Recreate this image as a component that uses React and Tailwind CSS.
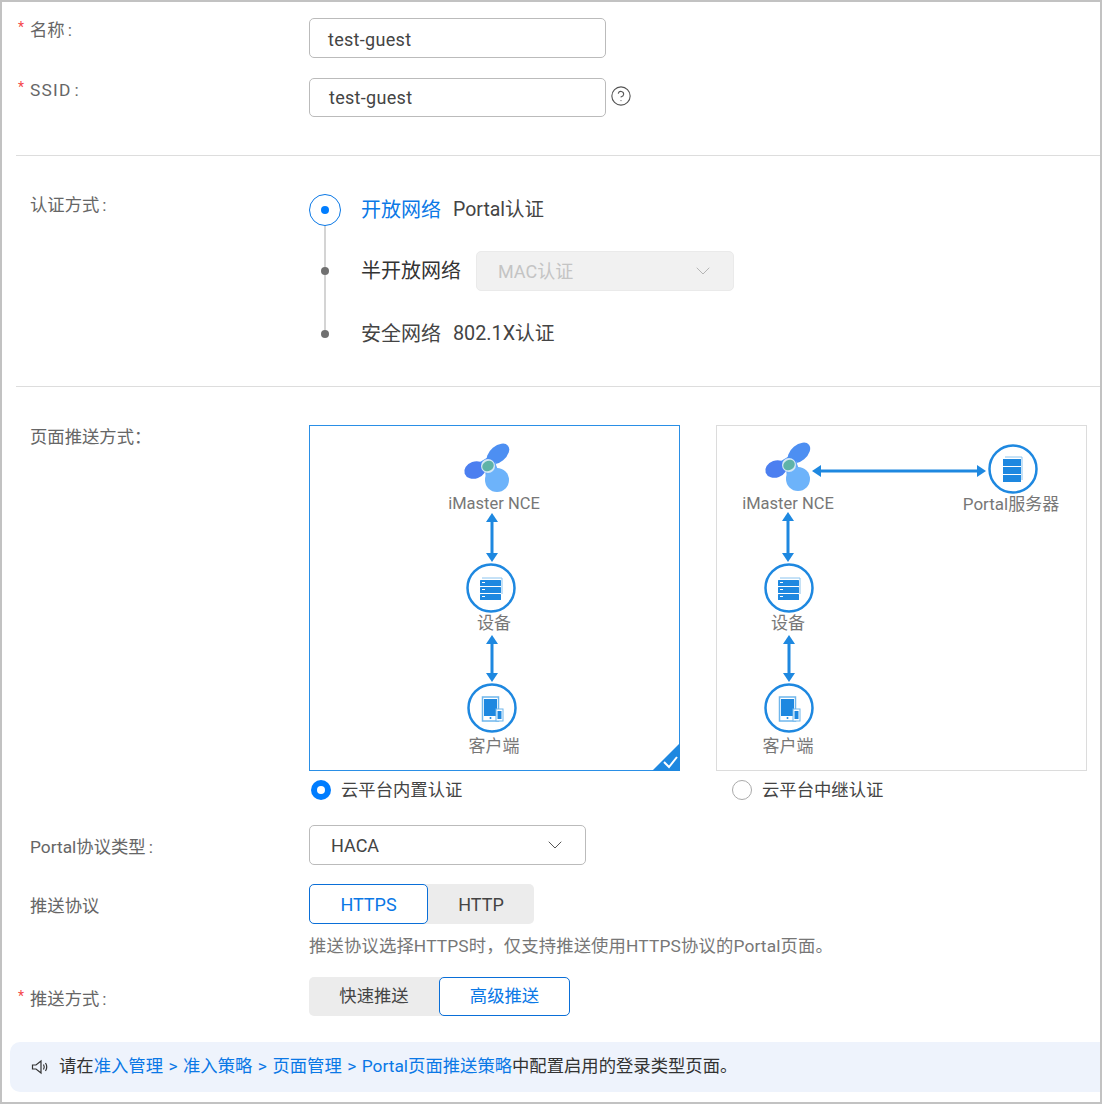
import { ChevronDown, CircleHelp } from 'lucide-react';

const FONT = "font-['Roboto','Noto_Sans_CJK_SC',sans-serif]";

const Label = ({ required, colon, children, className = '' }) => (
  <div className={`w-[307px] shrink-0 flex pl-[16px] text-[17.33px] leading-[24px] text-[#666] ${className}`}>
    <span className="w-[12px] text-[14px] leading-[18px] text-[#f5484a]">{required ? '*' : ''}</span>
    <span>{children}</span>
    {colon && <span className="ml-[3px]">:</span>}
  </div>
);

const Logo = ({ x, y }) => (
  <g transform={`translate(${x} ${y})`}>
    <ellipse cx="10" cy="-12" rx="13" ry="8" fill="#4d8ff2" transform="rotate(-40 10 -12)" />
    <ellipse cx="-13" cy="4" rx="11" ry="8.5" fill="#4c7ff0" transform="rotate(-20 -13 4)" />
    <path d="M-8 -4 L2 -10 L8 -4 L4 4 L-4 6 Z" fill="#4d8ff2" />
    <path d="M-3 3 L8 -4 Q7 3 15 6 L12 14 L-2 14 Z" fill="#67aaf8" />
    <circle cx="9" cy="14" r="12" fill="#6db3fa" />
    <circle cx="0" cy="0" r="7" fill="#d5e8f5" />
    <ellipse cx="0" cy="0" rx="6" ry="5" fill="#5fb3a8" transform="rotate(-30)" />
  </g>
);

const VArrow = ({ x, y1, y2 }) => (
  <g fill="#1e88e0">
    <rect x={x - 1.5} y={y1 + 6} width="3" height={y2 - y1 - 12} />
    <path d={`M${x} ${y1} L${x + 6} ${y1 + 9} L${x - 6} ${y1 + 9} Z`} />
    <path d={`M${x} ${y2} L${x + 6} ${y2 - 9} L${x - 6} ${y2 - 9} Z`} />
  </g>
);

const HArrow = ({ y, x1, x2 }) => (
  <g fill="#1e88e0">
    <rect x={x1 + 6} y={y - 1.5} width={x2 - x1 - 12} height="3" />
    <path d={`M${x1} ${y} L${x1 + 9} ${y - 6} L${x1 + 9} ${y + 6} Z`} />
    <path d={`M${x2} ${y} L${x2 - 9} ${y - 6} L${x2 - 9} ${y + 6} Z`} />
  </g>
);

const Ring = ({ x, y }) => <circle cx={x} cy={y} r="23.5" fill="#fff" stroke="#1e88e0" strokeWidth="2.5" />;

const Device = ({ x, y }) => (
  <g>
    <Ring x={x} y={y} />
    <path d={`M${x - 9} ${y - 10} H${x + 11} V${y + 6}`} fill="none" stroke="#8cc4ee" strokeWidth="1" />
    {[-8, -1, 6].map((d) => (
      <g key={d}>
        <rect x={x - 11} y={y + d} width="21" height="6" rx="0.5" fill="#1e88e0" />
        <rect x={x - 9} y={y + d + 2} width="3" height="1" fill="#fff" />
      </g>
    ))}
  </g>
);

const Client = ({ x, y }) => (
  <g>
    <Ring x={x} y={y} />
    <rect x={x - 9.5} y={y - 11} width="16" height="24" fill="#fff" stroke="#6fb6ec" strokeWidth="1.5" />
    <rect x={x - 8} y={y - 9} width="13" height="17" fill="#1e88e0" />
    <circle cx={x - 1.5} cy={y + 10} r="1" fill="#1e88e0" />
    <rect x={x + 4} y={y + 1} width="7" height="12" fill="#fff" stroke="#6fb6ec" strokeWidth="1" />
    <rect x={x + 5.5} y={y + 3} width="4" height="8" fill="#1e88e0" />
  </g>
);

const PortalServer = ({ x, y }) => (
  <g>
    <Ring x={x} y={y} />
    <path d={`M${x - 8} ${y - 12} H${x + 9} V${y + 11}`} fill="none" stroke="#8cc4ee" strokeWidth="1" />
    {[-10, -2, 6].map((d) => (
      <rect key={d} x={x - 10} y={y + d} width="18" height="7" fill="#1e88e0" />
    ))}
  </g>
);

const DiagramText = ({ x, y, small, children }) => (
  <span
    className={`absolute -translate-x-1/2 -translate-y-1/2 whitespace-nowrap leading-[24px] text-[#777] ${small ? 'text-[16.5px]' : 'text-[17px]'}`}
    style={{ left: x, top: y }}
  >
    {children}
  </span>
);

const CardOne = () => (
  <div className="relative w-[371px] h-[346px] border border-[#2a8fe6] bg-white">
    <svg className="absolute -left-px -top-px" width="371" height="346" viewBox="0 0 371 346">
      <Logo x={179} y={41} />
      <VArrow x={183} y1={88} y2={137} />
      <Device x={182} y={163} />
      <VArrow x={183} y1={210} y2={257} />
      <Client x={183} y={283} />
      <path d="M343 346 L371 318 V346 Z" fill="#1e88e0" />
      <path d="M355 337 L360 342 L368 332" fill="none" stroke="#fff" strokeWidth="2" />
    </svg>
    <DiagramText small x={184} y={78}>iMaster NCE</DiagramText>
    <DiagramText x={184} y={197}>设备</DiagramText>
    <DiagramText x={184} y={320}>客户端</DiagramText>
  </div>
);

const CardTwo = () => (
  <div className="relative w-[371px] h-[346px] border border-[#dcdcdc] bg-white">
    <svg className="absolute -left-px -top-px" width="371" height="346" viewBox="0 0 371 346">
      <Logo x={73} y={40} />
      <HArrow y={46} x1={96} x2={270} />
      <PortalServer x={297} y={44} />
      <VArrow x={72} y1={87} y2={137} />
      <Device x={73} y={163} />
      <VArrow x={73} y1={210} y2={257} />
      <Client x={73} y={283} />
    </svg>
    <DiagramText small x={71} y={78}>iMaster NCE</DiagramText>
    <DiagramText x={294} y={78}>Portal服务器</DiagramText>
    <DiagramText x={71} y={197}>设备</DiagramText>
    <DiagramText x={71} y={320}>客户端</DiagramText>
  </div>
);

const Seg = ({ active, className = '', children }) => (
  <div
    className={`flex items-center justify-center pt-[1px] ${
      active ? 'bg-white border border-[#0a6fd8] rounded-[5px] text-[#0a78e6]' : 'text-[#444]'
    } ${className}`}
  >
    {children}
  </div>
);

export default function App() {
  return (
    <div className={`${FONT} box-border w-[1102px] h-[1104px] border-2 border-[#c2c2c2] bg-white overflow-hidden`}>
      <div className="flex mt-[16px]">
        <Label required colon>名称</Label>
        <div className="w-[297px] h-[40px] border border-[#bbb] rounded-[5px] pl-[18px] pt-[2px] flex items-center text-[18px] tracking-[0.3px] text-[#444]">test-guest</div>
      </div>
      <div className="flex mt-[20px]">
        <Label required colon><span className="tracking-[1.2px]">SSID</span></Label>
        <div className="w-[297px] h-[39px] border border-[#bbb] rounded-[5px] pl-[19px] flex items-center text-[18px] tracking-[0.3px] text-[#444]">test-guest</div>
        <CircleHelp size={22} strokeWidth={1.2} color="#555" className="ml-[4px] mt-[7px]" />
      </div>
      <div className="h-px bg-[#ddd] ml-[14px] mt-[38px]" />

      <div className="flex mt-[37px]">
        <Label colon>认证方式</Label>
        <div className="relative flex flex-col">
          <div className="absolute left-[15px] top-[20px] w-[2px] h-[120px] bg-[#d4d4d4]" />
          <div className="flex items-center h-[32px] pt-[1px] text-[20px] text-[#444]">
            <div className="relative w-[32px] h-[32px] rounded-full border border-[#0a78e6] bg-white flex items-center justify-center">
              <div className="w-[8px] h-[8px] rounded-full bg-[#007dff]" />
            </div>
            <span className="ml-[20px] text-[#0a78e6]">开放网络</span>
            <span className="ml-[12px] text-[19.5px]">Portal认证</span>
          </div>
          <div className="flex items-center h-[40px] mt-[26px] text-[20px] text-[#333]">
            <div className="relative w-[32px] flex justify-center">
              <div className="w-[8px] h-[8px] rounded-full bg-[#707070]" />
            </div>
            <span className="ml-[20px]">半开放网络</span>
            <div className="ml-[15px] w-[258px] h-[40px] rounded-[5px] border border-[#eaeaea] bg-[#f1f1f1] pl-[21px] pr-[18px] flex items-center justify-between text-[18px] text-[#c4c4c4]">
              <span>MAC认证</span>
              <ChevronDown size={24} strokeWidth={1} color="#b5b5b5" />
            </div>
          </div>
          <div className="flex items-center h-[32px] mt-[26px] pt-[1px] text-[20px] text-[#444]">
            <div className="relative w-[32px] flex justify-center">
              <div className="w-[8px] h-[8px] rounded-full bg-[#707070]" />
            </div>
            <span className="ml-[20px]">安全网络</span>
            <span className="ml-[12px] text-[19.8px]">802.1X认证</span>
          </div>
        </div>
      </div>
      <div className="h-px bg-[#ddd] ml-[14px] mt-[37px]" />

      <div className="flex mt-[38px]">
        <Label>页面推送方式：</Label>
        <div className="flex flex-col">
          <div className="flex gap-[36px]">
            <CardOne />
            <CardTwo />
          </div>
          <div className="flex mt-[8px] text-[17.33px] leading-[22px] text-[#444]">
            <div className="w-[407px] flex items-center pl-[2px]">
              <div className="w-[20px] h-[20px] rounded-full bg-[#007dff] flex items-center justify-center">
                <div className="w-[8px] h-[8px] rounded-full bg-white" />
              </div>
              <span className="ml-[10px]">云平台内置认证</span>
            </div>
            <div className="flex items-center pl-[16px]">
              <div className="w-[20px] h-[20px] rounded-full border border-[#aaa] bg-white" />
              <span className="ml-[10px]">云平台中继认证</span>
            </div>
          </div>
        </div>
      </div>

      <div className="flex mt-[24px]">
        <Label colon className="pt-[10px]">Portal协议类型</Label>
        <div className="w-[277px] h-[40px] border border-[#bbb] rounded-[5px] pl-[21px] pr-[18px] flex items-center justify-between text-[18px] text-[#444]">
          <span>HACA</span>
          <ChevronDown size={24} strokeWidth={1} color="#555" />
        </div>
      </div>

      <div className="flex mt-[19px]">
        <Label className="pt-[10px]">推送协议</Label>
        <div>
          <div className="flex w-[225px] h-[40px] bg-[#ececec] rounded-[5px] text-[18px]">
            <Seg active className="w-[119px]">HTTPS</Seg>
            <Seg className="w-[106px]">HTTP</Seg>
          </div>
          <div className="mt-[10px] text-[17.33px] leading-[24px] tracking-[0.15px] text-[#777] whitespace-nowrap">
            推送协议选择HTTPS时，仅支持推送使用HTTPS协议的Portal页面。
          </div>
        </div>
      </div>

      <div className="flex mt-[19px]">
        <Label required colon className="pt-[10px]">推送方式</Label>
        <div className="flex w-[261px] h-[39px] bg-[#ececec] rounded-[5px] text-[17.33px]">
          <Seg className="w-[130px]">快速推送</Seg>
          <Seg active className="w-[131px]">高级推送</Seg>
        </div>
      </div>

      <div className="ml-[8px] mt-[26px] h-[50px] rounded-l-[10px] bg-[#eef3fc] flex items-center pl-[21px] text-[17.33px] text-[#333] whitespace-nowrap">
        <svg width="18" height="18" viewBox="0 0 18 18" fill="none" stroke="#333" strokeWidth="1.2">
          <path d="M1.5 7 H5 L10 3 V15 L5 11 H1.5 Z" />
          <path d="M12.5 6.5 Q14 9 12.5 11.5" />
          <path d="M14.5 5 Q17 9 14.5 13" />
        </svg>
        <span className="ml-[10px]">请在</span>
        <span className="text-[#0a78e6] [word-spacing:1.2px]">准入管理 &gt; 准入策略 &gt; 页面管理 &gt; Portal页面推送策略</span>
        <span>中配置启用的登录类型页面。</span>
      </div>
    </div>
  );
}
